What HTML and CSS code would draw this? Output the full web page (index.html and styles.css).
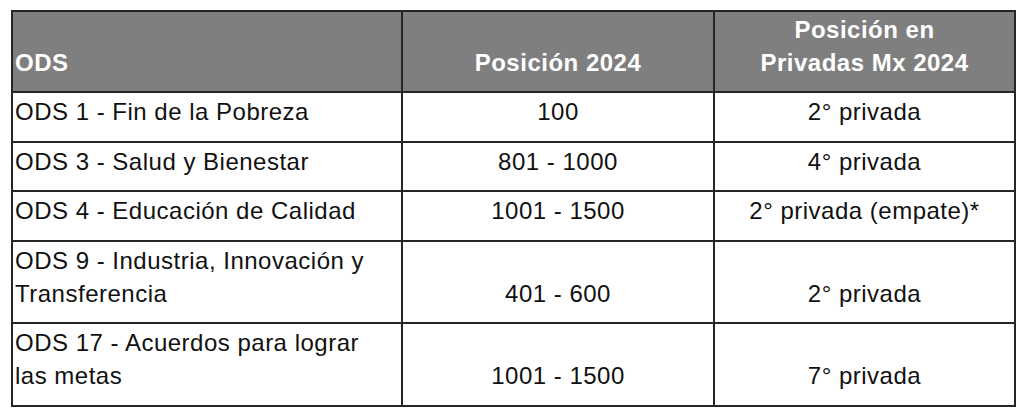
FILE: index.html
```html
<!DOCTYPE html>
<html lang="es">
<head>
<meta charset="utf-8">
<title>ODS</title>
<link rel="stylesheet" href="styles.css">
</head>
<body>
<table class="ods-table">
  <colgroup>
    <col class="col-ods">
    <col class="col-pos">
    <col class="col-priv">
  </colgroup>
  <thead>
    <tr>
      <th class="cell-left">ODS</th>
      <th>Posición 2024</th>
      <th>Posición en<br>Privadas Mx 2024</th>
    </tr>
  </thead>
  <tbody>
    <tr>
      <td class="cell-left">ODS 1 - Fin de la Pobreza</td>
      <td>100</td>
      <td>2° privada</td>
    </tr>
    <tr>
      <td class="cell-left">ODS 3 - Salud y Bienestar</td>
      <td>801 - 1000</td>
      <td>4° privada</td>
    </tr>
    <tr>
      <td class="cell-left">ODS 4 - Educación de Calidad</td>
      <td>1001 - 1500</td>
      <td>2° privada (empate)*</td>
    </tr>
    <tr>
      <td class="cell-left">ODS 9 - Industria, Innovación y<br>Transferencia</td>
      <td>401 - 600</td>
      <td>2° privada</td>
    </tr>
    <tr>
      <td class="cell-left">ODS 17 - Acuerdos para lograr<br>las metas</td>
      <td>1001 - 1500</td>
      <td>7° privada</td>
    </tr>
  </tbody>
</table>
</body>
</html>
```

FILE: styles.css
```css
html, body {
  background: #ffffff;
}

body {
  margin: 10px 0 0 11px;
  font-family: "Liberation Sans", Arial, sans-serif;
  color: #111111;
}

.ods-table {
  border-collapse: collapse;
  width: 1003px;
  table-layout: fixed;
  font-size: 24px;
  letter-spacing: 0.5px;
  line-height: 33px;
}

.col-ods { width: 390px; }
.col-pos { width: 312px; }
.col-priv { width: 301px; }

.ods-table th,
.ods-table td {
  border: 2px solid #262626;
  vertical-align: bottom;
  text-align: center;
  white-space: nowrap;
}

.ods-table th {
  background: #7f7f7f;
  color: #ffffff;
  font-weight: bold;
  padding: 1px 3px 12px;
}

.ods-table td {
  padding: 2px 3px 12.5px;
}

.ods-table .cell-left {
  text-align: left;
  padding-left: 2px;
}
```
